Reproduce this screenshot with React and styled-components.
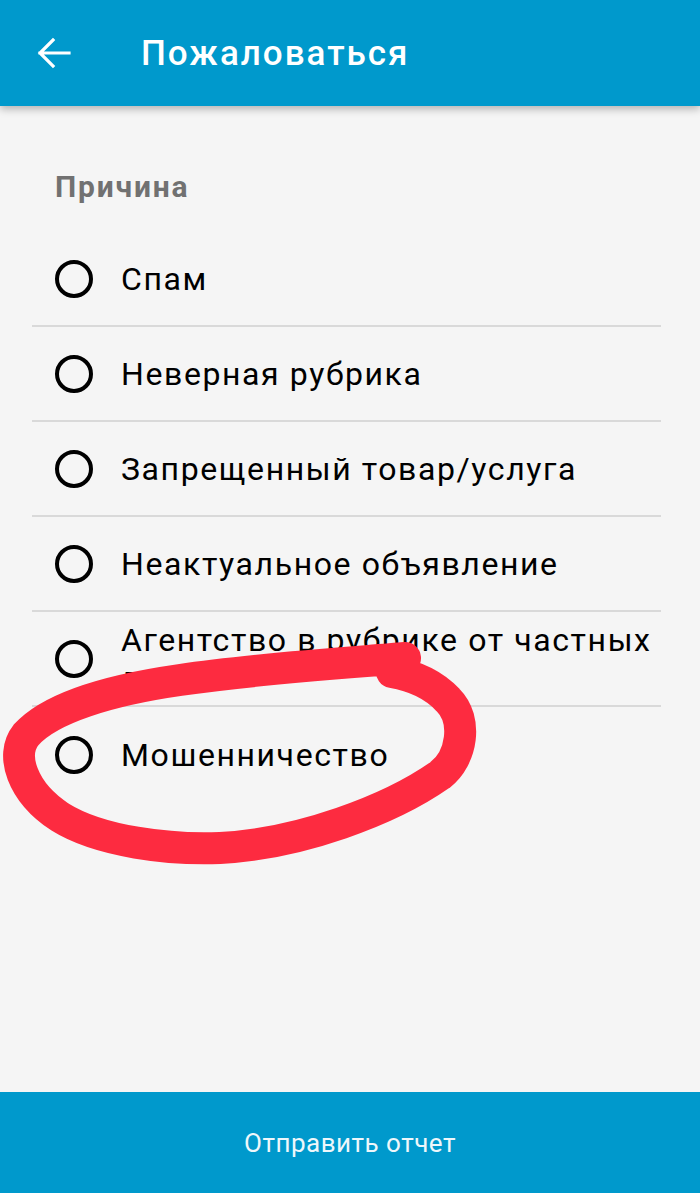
import React from 'react'
import styled, { createGlobalStyle } from 'styled-components'

const reasons = [
  'Спам',
  'Неверная рубрика',
  'Запрещенный товар/услуга',
  'Неактуальное объявление',
  'Агентство в рубрике от частных лиц',
  'Мошенничество',
]

function App() {
  return (
    <>
      <GlobalStyle />
      <Screen>
        <Header>
          <BackButton aria-label="Назад">
            <svg width="34" height="32" viewBox="0 0 34 32" fill="none">
              <path d="M32 16H3M16 3L3 16l13 13" stroke="#fff" strokeWidth="3.2" strokeLinecap="square" />
            </svg>
          </BackButton>
          <Title>Пожаловаться</Title>
        </Header>

        <Content>
          <Label>Причина</Label>
          <List>
            {reasons.map((r, i) => (
              <Row key={r} last={i === reasons.length - 1}>
                <Radio />
                <RowText>{r}</RowText>
              </Row>
            ))}
          </List>

          {/* hand drawn red mark over the last option */}
          <Scribble width="700" height="1193" viewBox="0 0 700 1193">
            <path
              d="M405 658 C 360 662, 260 668, 180 680 C 110 690, 50 708, 26 735 C 10 755, 22 792, 60 817 C 100 842, 170 850, 220 848 C 300 844, 390 810, 440 775 C 462 758, 468 720, 448 700 C 435 686, 415 676, 392 672"
              stroke="#fd2b40"
              strokeWidth="32"
              strokeLinecap="round"
              strokeLinejoin="round"
              fill="none"
            />
          </Scribble>
        </Content>

        <Footer>Отправить отчет</Footer>
      </Screen>
    </>
  )
}

export default App

const GlobalStyle = createGlobalStyle`
  html, body {
    margin: 0;
    padding: 0;
    background: #f5f5f5;
  }
  * {
    box-sizing: border-box;
  }
`

const Screen = styled.div`
  width: 700px;
  height: 1193px;
  display: flex;
  flex-direction: column;
  background: #f5f5f5;
  font-family: Roboto, "Liberation Sans", sans-serif;
  overflow: hidden;
`

const Header = styled.header`
  height: 106px;
  flex-shrink: 0;
  display: flex;
  align-items: center;
  background: #0099cc;
  box-shadow: 0 3px 8px rgba(0, 0, 0, 0.28);
  position: relative;
  z-index: 2;
`

const BackButton = styled.div`
  width: 141px;
  padding-left: 37px;
  display: flex;
  align-items: center;
`

const Title = styled.h1`
  margin: 0;
  color: #fff;
  font-size: 35px;
  font-weight: 500;
  letter-spacing: 2px;
`

const Content = styled.main`
  flex: 1;
  position: relative;
  padding: 0 39px 0 32px;
`

const Label = styled.div`
  padding: 62px 0 0 23px;
  height: 126px;
  color: #717171;
  font-size: 30px;
  font-weight: 700;
  line-height: 38px;
  letter-spacing: 1.8px;
`

const List = styled.div`
  display: flex;
  flex-direction: column;
`

const Row = styled.div`
  height: 95px;
  display: flex;
  align-items: center;
  padding-left: 23px;
  border-bottom: ${(p) => (p.last ? 'none' : '2px solid #d9d9d9')};
`

const Radio = styled.span`
  width: 38px;
  height: 38px;
  flex-shrink: 0;
  border: 4px solid #000;
  border-radius: 50%;
`

const RowText = styled.span`
  margin-left: 28px;
  color: #000;
  font-size: 32px;
  line-height: 38px;
  letter-spacing: 1.6px;
`

const Scribble = styled.svg`
  position: absolute;
  left: 0;
  top: -106px;
  pointer-events: none;
`

const Footer = styled.footer`
  height: 101px;
  flex-shrink: 0;
  display: flex;
  align-items: center;
  justify-content: center;
  background: #0099cc;
  color: #eef7fb;
  font-size: 26px;
  letter-spacing: 0.5px;
`
